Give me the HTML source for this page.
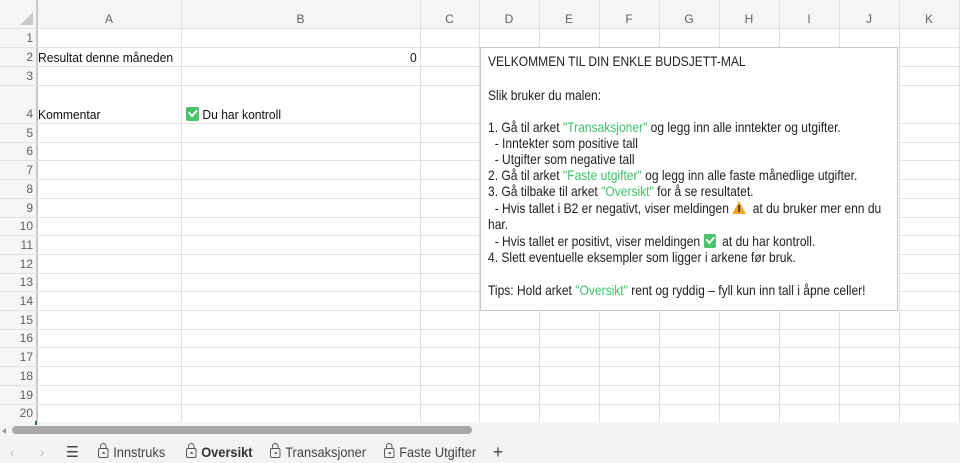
<!DOCTYPE html>
<html><head><meta charset="utf-8"><style>
*{margin:0;padding:0;box-sizing:border-box}
body{width:960px;height:463px;overflow:hidden;background:#fff;font-family:"Liberation Sans",sans-serif;position:relative}
.a{position:absolute}
.vl{position:absolute;width:1px;background:#e1e1e1}
.hl{position:absolute;height:1px;background:#e1e1e1}
.ch{position:absolute;top:12px;font-size:12px;color:#616161;text-align:center}
.rh{position:absolute;left:0;width:33px;text-align:right;font-size:12px;color:#616161}
.t{position:absolute;white-space:nowrap;font-size:14px;color:#222;transform:scaleX(0.86);transform-origin:left top}
.c{position:absolute;white-space:nowrap;font-size:13px;color:#111;transform:scaleX(0.93);transform-origin:left top}
.g{color:#3cc36a}
.chk{display:inline-block;width:14px;height:14px;background:#4cc26d;border-radius:2px;vertical-align:-2px;position:relative}
.chk:after{content:"";position:absolute;left:3px;top:2px;width:7px;height:4px;border-left:2px solid #fff;border-bottom:2px solid #fff;transform:rotate(-45deg)}
.warn{display:inline-block;width:0;height:0;border-left:8px solid transparent;border-right:8px solid transparent;border-bottom:13px solid #f5a623;vertical-align:-1px;position:relative}
.warn:after{content:"";position:absolute;left:-1px;top:4px;width:2px;height:7px;background:#333}
.tab{position:absolute;top:445px;font-size:13.5px;color:#444;white-space:nowrap;transform:scaleX(0.95);transform-origin:left top}
.lock{display:inline-block;width:11px;height:10px;border:1.3px solid #555;border-radius:2px;position:relative;margin-right:5px;vertical-align:-1px}
.lock:before{content:"";position:absolute;left:1px;top:-6px;width:5px;height:5px;border:1.3px solid #555;border-bottom:none;border-radius:4px 4px 0 0}
.lock:after{content:"";position:absolute;left:3.5px;top:3px;width:2px;height:2px;background:#555}
</style></head><body>
<div class="a" style="left:0;top:0;width:960px;height:29px;background:#f5f5f5"></div>
<div class="a" style="left:0;top:0;width:37px;height:422px;background:#f5f5f5"></div>
<div class="a" style="left:37px;top:28px;width:923px;height:1px;background:#c8c8c8"></div>
<div class="a" style="left:36px;top:0;width:1px;height:422px;background:#c8c8c8"></div>
<div class="a" style="left:20px;top:12px;width:0;height:0;border-left:13px solid transparent;border-bottom:13px solid #c9c9c9"></div>
<div id="grid"></div>
<div class="c" style="left:38px;top:50px">Resultat denne måneden</div>
<div class="c" style="left:410px;top:50px">0</div>
<div class="c" style="left:38px;top:107px">Kommentar</div>
<div class="c" style="left:186px;top:107px"><span class="chk"></span> Du har kontroll</div>

<div class="a" style="left:480px;top:47px;width:418px;height:264px;background:#fff;border:1px solid #c6c6c6"></div>
<div class="t" style="left:488px;top:53px">VELKOMMEN TIL DIN ENKLE BUDSJETT-MAL</div>
<div class="t" style="left:488px;top:87px">Slik bruker du malen:</div>
<div class="t" style="left:488px;top:119px">1. Gå til arket <span class="g">"Transaksjoner"</span> og legg inn alle inntekter og utgifter.</div>
<div class="t" style="left:488px;top:135px">&nbsp;&nbsp;- Inntekter som positive tall</div>
<div class="t" style="left:488px;top:151px">&nbsp;&nbsp;- Utgifter som negative tall</div>
<div class="t" style="left:488px;top:167px">2. Gå til arket <span class="g">"Faste utgifter"</span> og legg inn alle faste månedlige utgifter.</div>
<div class="t" style="left:488px;top:183px">3. Gå tilbake til arket <span class="g">"Oversikt"</span> for å se resultatet.</div>
<div class="t" style="left:488px;top:200px">&nbsp;&nbsp;- Hvis tallet i B2 er negativt, viser meldingen <span class="warn"></span>&nbsp; at du bruker mer enn du</div>
<div class="t" style="left:488px;top:216px">har.</div>
<div class="t" style="left:488px;top:233px">&nbsp;&nbsp;- Hvis tallet er positivt, viser meldingen <span class="chk"></span>&nbsp; at du har kontroll.</div>
<div class="t" style="left:488px;top:249px">4. Slett eventuelle eksempler som ligger i arkene før bruk.</div>
<div class="t" style="left:488px;top:282px">Tips: Hold arket <span class="g">"Oversikt"</span> rent og ryddig – fyll kun inn tall i åpne celler!</div>

<div class="a" style="left:0;top:422px;width:960px;height:15px;background:#f3f3f3"></div>
<div class="a" style="left:35px;top:421px;width:2px;height:4px;background:#217346"></div>
<div class="a" style="left:2px;top:428px;width:0;height:0;border-top:3px solid transparent;border-bottom:3px solid transparent;border-right:4px solid #999"></div>
<div class="a" style="left:12px;top:426px;width:460px;height:8px;background:#a8a8a8;border-radius:4px"></div>
<div class="a" style="left:0;top:437px;width:960px;height:26px;background:#f3f3f3"></div>
<div class="tab" style="left:10px;color:#bbb">‹</div>
<div class="tab" style="left:40px;color:#bbb">›</div>
<div class="tab" style="left:66px;font-size:15px;top:443px">☰</div>
<div class="tab" style="left:98px"><span class="lock"></span>Innstruks</div>
<div class="tab" style="left:186px;font-weight:bold;color:#333"><span class="lock"></span>Oversikt</div>
<div class="tab" style="left:270px"><span class="lock"></span>Transaksjoner</div>
<div class="tab" style="left:384px"><span class="lock"></span>Faste Utgifter</div>
<div class="tab" style="left:493px;font-size:18px;top:442px">+</div>
<script>
var g=document.getElementById('grid'),h='';
var cols=[37,181,420,479,539,599,659,719,779,839,899,959],names='ABCDEFGHIJK';
for(var i=0;i<cols.length;i++){h+='<div class="vl" style="left:'+cols[i]+'px;top:0;height:422px;'+(i==0?'background:#c8c8c8':'')+'"></div>';
if(i<11)h+='<div class="ch" style="left:'+cols[i]+'px;width:'+(cols[i+1]-cols[i])+'px">'+names[i]+'</div>';}
var rows=[28,47,66,85,123];for(var k=1;k<=16;k++)rows.push(123+18.7*k);
for(var r=0;r<rows.length;r++){h+='<div class="hl" style="left:0;width:960px;top:'+Math.round(rows[r])+'px"></div>';
if(r<20){var b=rows[r+1];h+='<div class="rh" style="top:'+Math.round(b-16)+'px">'+(r+1)+'</div>';}}
g.innerHTML=h;
</script>
</body></html>
